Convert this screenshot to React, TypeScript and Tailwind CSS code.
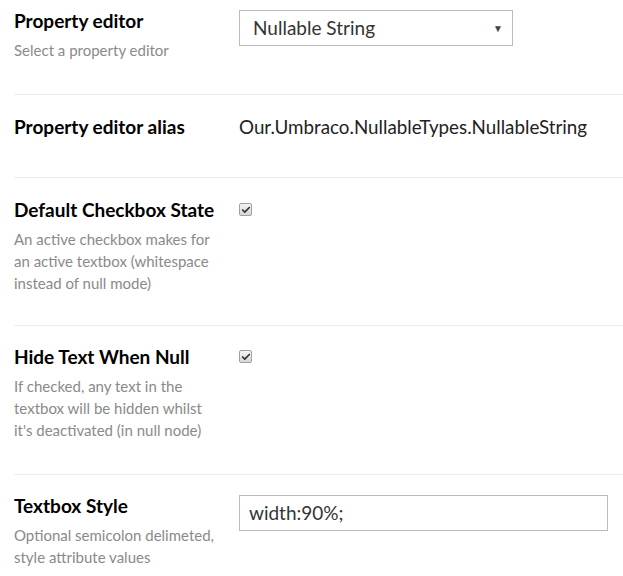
import { Check } from "lucide-react";

type Row = {
  title: string;
  desc?: string[];
  field: "select" | "alias" | "checkbox" | "input";
  pad: string;
};

const rows: Row[] = [
  { title: "Property editor", desc: ["Select a property editor"], field: "select", pad: "pt-[10px] pb-[33px]" },
  { title: "Property editor alias", field: "alias", pad: "pt-[21px] pb-[39px]" },
  {
    title: "Default Checkbox State",
    desc: ["An active checkbox makes for", "an active textbox (whitespace", "instead of null mode)"],
    field: "checkbox",
    pad: "pt-[21px] pb-[31px]",
  },
  {
    title: "Hide Text When Null",
    desc: ["If checked, any text in the", "textbox will be hidden whilst", "it's deactivated (in null node)"],
    field: "checkbox",
    pad: "pt-[20px] pb-[33px]",
  },
  {
    title: "Textbox Style",
    desc: ["Optional semicolon delimeted,", "style attribute values"],
    field: "input",
    pad: "pt-[20px] pb-[20px]",
  },
];

function Checkbox() {
  return (
    <span className="mt-[4px] flex h-[13px] w-[13px] items-center justify-center rounded-[2px] border border-[#a0a0a0] bg-gradient-to-b from-[#f4f4f4] to-[#d8d8d8]">
      <Check size={10} strokeWidth={4} className="text-[#333]" />
    </span>
  );
}

function Field({ kind }: { kind: Row["field"] }) {
  if (kind === "select")
    return (
      <div className="flex h-[36px] w-[274px] items-center justify-between border border-[#bbb] bg-white pl-[13px] pr-[9px] text-[19px] text-[#343434]">
        <span>Nullable String</span>
        <span className="text-[10px] text-[#444]">▼</span>
      </div>
    );
  if (kind === "alias")
    return <div className="text-[18.8px] leading-[22px] text-[#222]">Our.Umbraco.NullableTypes.NullableString</div>;
  if (kind === "checkbox") return <Checkbox />;
  return (
    <div className="flex h-[36px] w-[369px] items-center border border-[#bbb] bg-white px-[9px] text-[19px] text-[#343434]">
      width:90%;
    </div>
  );
}

export default function App() {
  return (
    <div className="min-h-[576px] w-[623px] bg-white pl-[14px] font-['Lato','Open_Sans',sans-serif]">
      {rows.map((row, i) => (
        <div
          key={row.title}
          className={`grid grid-cols-[225px_1fr] ${row.pad} ${i < rows.length - 1 ? "border-b border-[#ececec]" : ""}`}
        >
          <div className="w-[210px]">
            <div className="text-[19px] font-bold leading-[22px] text-[#000]">{row.title}</div>
            {row.desc && (
              <div className="mt-[7px] text-[15px] leading-[22px] text-[#8a8a8a]">
                {row.desc.map((d) => (
                  <div key={d} className="whitespace-nowrap">{d}</div>
                ))}
              </div>
            )}
          </div>
          <div>
            <Field kind={row.field} />
          </div>
        </div>
      ))}
    </div>
  );
}
